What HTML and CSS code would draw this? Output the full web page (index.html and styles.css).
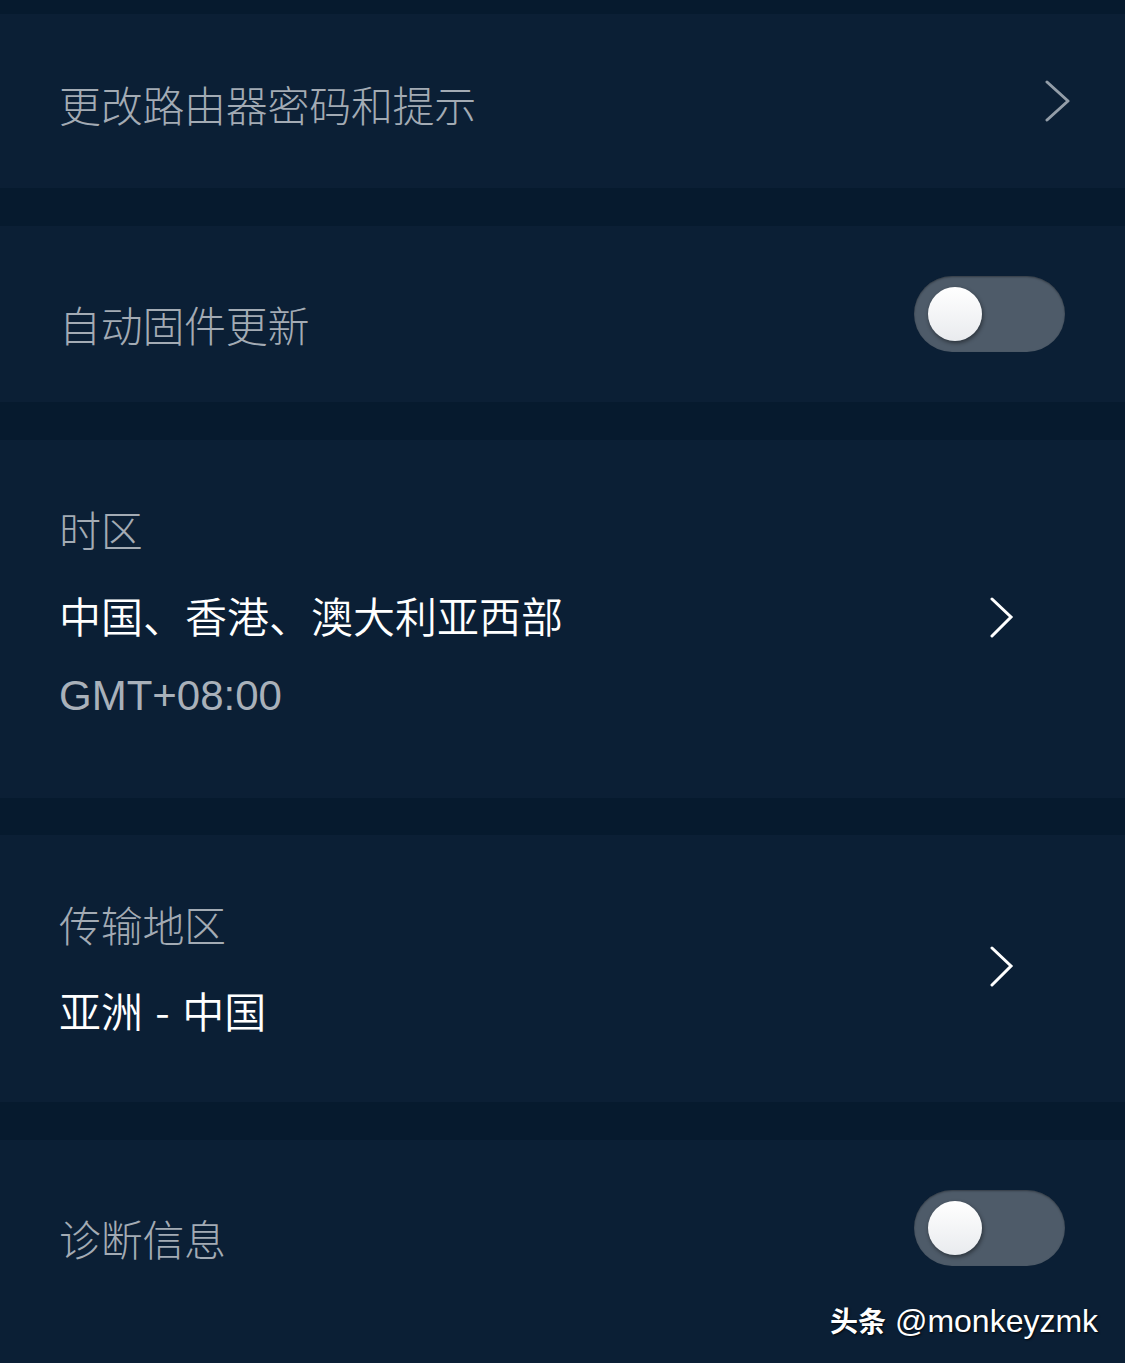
FILE: index.html
```html
<!DOCTYPE html>
<html lang="zh-CN">
<head>
<meta charset="utf-8">
<title>设置</title>
<link rel="stylesheet" href="styles.css">
</head>
<body>
<div class="page">
  <div class="sep sep-top"></div>

  <div class="section s1">
    <div class="row">
      <span class="label label-s1">更改路由器密码和提示</span>
      <svg class="chev chev-gray" width="28" height="42" viewBox="0 0 28 42"><path d="M3 2 L24 21 L3 40" fill="none" stroke="#939da8" stroke-width="3" stroke-linecap="round" stroke-linejoin="round"/></svg>
    </div>
  </div>

  <div class="sep"></div>

  <div class="section s2">
    <div class="row">
      <span class="label label-toggle">自动固件更新</span>
      <div class="toggle"><div class="knob"></div></div>
    </div>
  </div>

  <div class="sep"></div>

  <div class="section s3">
    <div class="row-multi">
      <div class="stack">
        <div class="label">时区</div>
        <div class="value">中国、香港、澳大利亚西部</div>
        <div class="sub">GMT+08:00</div>
      </div>
      <svg class="chev chev-white chev-s3" width="26" height="42" viewBox="0 0 26 42"><path d="M3 2 L22 20 L3 39" fill="none" stroke="#ffffff" stroke-width="3" stroke-linecap="round" stroke-linejoin="miter"/></svg>
    </div>
  </div>

  <div class="sep sep-37"></div>

  <div class="section s4">
    <div class="row-multi">
      <div class="stack">
        <div class="label">传输地区</div>
        <div class="value value-spaced">亚洲 - 中国</div>
      </div>
      <svg class="chev chev-white" width="26" height="42" viewBox="0 0 26 42"><path d="M3 2 L22 20 L3 39" fill="none" stroke="#ffffff" stroke-width="3" stroke-linecap="round" stroke-linejoin="miter"/></svg>
    </div>
  </div>

  <div class="sep"></div>

  <div class="section s5">
    <div class="row row-176">
      <span class="label label-toggle">诊断信息</span>
      <div class="toggle"><div class="knob"></div></div>
    </div>
  </div>

  <div class="watermark"><b>头条</b> @monkeyzmk</div>
</div>
</body>
</html>
```

FILE: styles.css
```css
html, body {
  margin: 0;
  padding: 0;
  background: #0b1f35;
}
body {
  font-family: "Noto Sans CJK SC", "Noto Sans", sans-serif;
  width: 1125px;
  height: 1363px;
  overflow: hidden;
}
.page {
  position: relative;
  display: flex;
  flex-direction: column;
  width: 1125px;
  height: 1363px;
}
.sep {
  height: 38px;
  background: #061a2e;
  flex: none;
}
.sep-top { height: 14px; }
.sep-37 { height: 37px; }
.section {
  background: #0b1f35;
  flex: none;
}
.s1 { height: 174px; }
.s2 { height: 176px; }
.s3 { height: 358px; }
.s4 { height: 267px; }
.s5 { height: 223px; }

.row {
  height: 100%;
  display: flex;
  align-items: center;
  justify-content: space-between;
  padding: 0 60px 0 59px;
  box-sizing: border-box;
}
.s1 .row { padding-right: 53px; }
.row-176 { height: 176px; }

.label {
  font-size: 42px;
  line-height: 56px;
  font-weight: 300;
  color: #a3abb4;
  letter-spacing: -0.3px;
}
.label-s1 { padding-top: 6px; }
.label-toggle { padding-top: 20px; }

.chev { display: block; flex: none; }
.chev-s3 { margin-top: 10px; }

.row-multi {
  display: flex;
  align-items: center;
  justify-content: space-between;
  padding: 61px 110px 0 59px;
}
.stack {
  display: flex;
  flex-direction: column;
}
.value {
  font-size: 42px;
  line-height: 56px;
  font-weight: 350;
  color: #ffffff;
  margin-top: 30px;
}
.value-spaced { word-spacing: 3px; }
.sub {
  font-family: "Liberation Sans", Arial, sans-serif;
  font-size: 42px;
  line-height: 56px;
  color: #a9b1ba;
  margin-top: 25px;
}

.toggle {
  width: 151px;
  height: 76px;
  border-radius: 38px;
  background: #4e5b69;
  box-shadow: inset 0 1px 2px rgba(0,0,0,0.35);
  display: flex;
  align-items: center;
  padding-left: 14px;
  box-sizing: border-box;
  flex: none;
}
.knob {
  width: 54px;
  height: 54px;
  border-radius: 50%;
  background: linear-gradient(#ffffff, #e9ebee);
  box-shadow: 1px 2px 4px rgba(0,0,0,0.45);
}

.watermark {
  position: absolute;
  left: 830px;
  top: 1298px;
  font-family: "Liberation Sans", "Noto Sans CJK SC", sans-serif;
  font-size: 32px;
  line-height: 44px;
  color: #ffffff;
  text-shadow: 1px 1px 2px rgba(0,0,0,0.8);
  white-space: nowrap;
}
.watermark b {
  font-family: "Noto Sans CJK SC", sans-serif;
  font-weight: 700;
  font-size: 28px;
}
```
